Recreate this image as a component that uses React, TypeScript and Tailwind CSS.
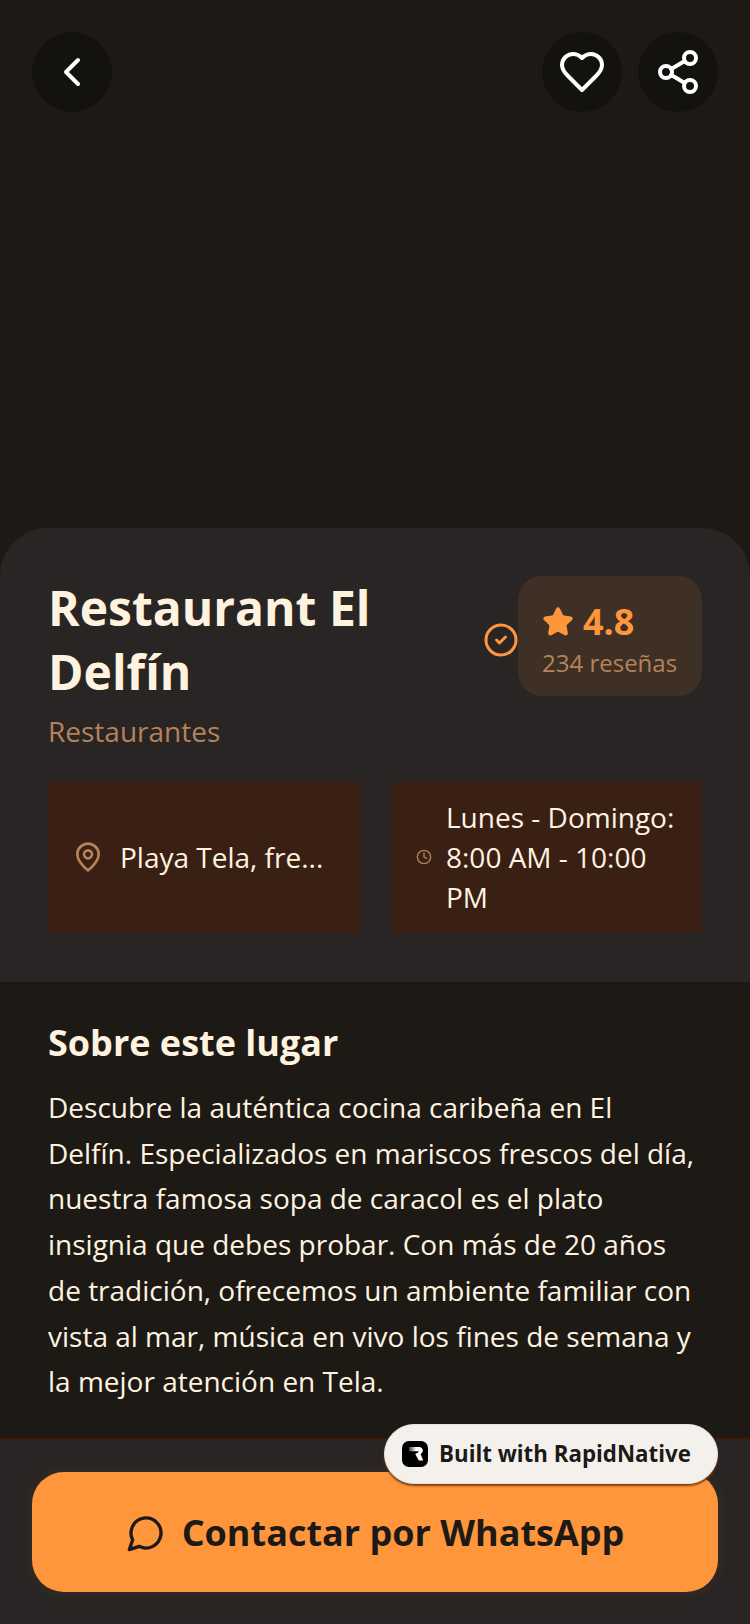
import { ChevronLeft, Share2, CircleCheck, Star, Clock } from "lucide-react";

export default function App() {
  return (
    <div className="relative flex h-[1624px] w-[750px] flex-col overflow-hidden bg-[#1d1a16] font-['Open_Sans',sans-serif] text-[#fff3e0]">
      <div className="flex-1 overflow-hidden">
        <div className="flex h-[528px] items-start justify-between p-8">
          <button className="flex h-20 w-20 items-center justify-center rounded-full bg-black/30">
            <ChevronLeft size={48} strokeWidth={2} className="text-white" />
          </button>
          <div className="flex gap-4">
            <button className="flex h-20 w-20 items-center justify-center rounded-full bg-black/30">
              <svg width="48" height="48" viewBox="0 0 24 24" fill="none" stroke="#fff" strokeWidth="2" strokeLinecap="round" strokeLinejoin="round">
                <path d="M19 14c1.49-1.46 3-3.21 3-5.5A5.5 5.5 0 0 0 16.5 3c-1.76 0-3 .5-4.5 2-1.5-1.5-2.74-2-4.5-2A5.5 5.5 0 0 0 2 8.5c0 2.3 1.5 4.05 3 5.5l7 7Z" />
              </svg>
            </button>
            <button className="flex h-20 w-20 items-center justify-center rounded-full bg-black/30">
              <Share2 size={48} strokeWidth={2} className="text-white" />
            </button>
          </div>
        </div>
        <div className="rounded-t-[48px] bg-[#292524] px-12 pb-[49px] pt-12">
          <div className="flex items-start">
            <div className="min-w-0 flex-1">
              <div className="text-[48px] font-bold leading-[64px]">Restaurant El Delfín</div>
            </div>
            <CircleCheck size={36} strokeWidth={2} className="-mr-px shrink-0 self-center text-[#ff963c]" />
            <div className="w-[184px] shrink-0 rounded-3xl bg-[#3f3026] px-6 pb-4 pt-[22px]">
              <div className="flex items-center gap-[9px]">
                <Star size={32} fill="#ff963c" className="text-[#ff963c]" />
                <span className="text-[36px] font-bold leading-[48px] text-[#ff963c]">4.8</span>
              </div>
              <div className="text-2xl leading-[34px] text-[#b5835a]">234 reseñas</div>
            </div>
          </div>
          <div className="mt-[7px] text-[28px] leading-10 text-[#b5835a]">Restaurantes</div>
          <div className="mt-[31px] flex gap-[31.5px]">
            <div className="flex h-[151px] w-[312.5px] items-center gap-4 bg-[#3a2014] px-6 pb-[2px]">
              <svg width="32" height="32" viewBox="0 0 24 24" fill="none" stroke="#b5835a" strokeWidth="2" strokeLinecap="round" strokeLinejoin="round" className="shrink-0">
                <path d="M20 10c0 6-8 12-8 12s-8-6-8-12a8 8 0 0 1 16 0Z" />
                <circle cx="12" cy="10" r="3" />
              </svg>
              <span className="truncate text-[28px] leading-10">Playa Tela, fre...</span>
            </div>
            <div className="flex h-[151px] flex-1 items-center gap-[14px] bg-[#3a2014] px-6 pb-[2px]">
              <Clock size={16} className="shrink-0 text-[#b5835a]" />
              <span className="text-[28px] leading-10">Lunes - Domingo: 8:00 AM - 10:00 PM</span>
            </div>
          </div>
        </div>
        <div className="px-12 pt-[37px]">
          <h2 className="text-[36px] font-bold leading-[48px]">Sobre este lugar</h2>
          <p className="mt-[18px] text-[28px] leading-[45.7px]">
            Descubre la auténtica cocina caribeña en El Delfín. Especializados en mariscos frescos del día, nuestra famosa sopa de caracol es el plato insignia que debes probar. Con más de 20 años de tradición, ofrecemos un ambiente familiar con vista al mar, música en vivo los fines de semana y la mejor atención en Tela.
          </p>
        </div>
      </div>
      <div className="h-[186px] border-t-2 border-[#431a0a] bg-[#292524] px-8 pt-8">
        <button className="flex h-[120px] w-full items-center justify-center gap-4 rounded-[32px] bg-[#ff963c] pt-[2px] text-[#1c1917] shadow-[0_0_16px_rgba(255,150,60,0.08)]">
          <svg width="40" height="40" viewBox="0 0 24 24" fill="none" stroke="currentColor" strokeWidth="2" strokeLinecap="round" strokeLinejoin="round">
            <path d="M7.9 20A9 9 0 1 0 4 16.1L2 22Z" />
          </svg>
          <span className="text-[36px] font-bold">Contactar por WhatsApp</span>
        </button>
      </div>
      <div className="absolute left-[384px] top-[1424px] flex h-[60px] w-[334px] items-center gap-[11px] rounded-full border border-[#e7e3de] bg-[#f4f1ed] pl-[17px] shadow-[0_2px_2px_rgba(120,55,5,0.9)]">
        <div className="flex h-[26px] w-[26px] shrink-0 items-center justify-center rounded-[7px] bg-black">
          <svg width="26" height="26" viewBox="0 0 26 26">
            <defs>
              <linearGradient id="rn" x1="0" x2="1" y1="0" y2="0">
                <stop offset="0" stopColor="#fff" stopOpacity="0.25" />
                <stop offset="0.5" stopColor="#fff" />
              </linearGradient>
            </defs>
            <path d="M7 6h10c2.4 0 3.8 1.4 3.8 3.5 0 1.6-.8 2.7-2.2 3.4l2.6 6.6h-4.4l-3.6-6.6 3.2-1.6c.5-.3.4-1-.3-1H7z" fill="url(#rn)" />
          </svg>
        </div>
        <span className="whitespace-nowrap text-[22.3px] font-bold text-[#1c1917]">Built with RapidNative</span>
      </div>
    </div>
  );
}
